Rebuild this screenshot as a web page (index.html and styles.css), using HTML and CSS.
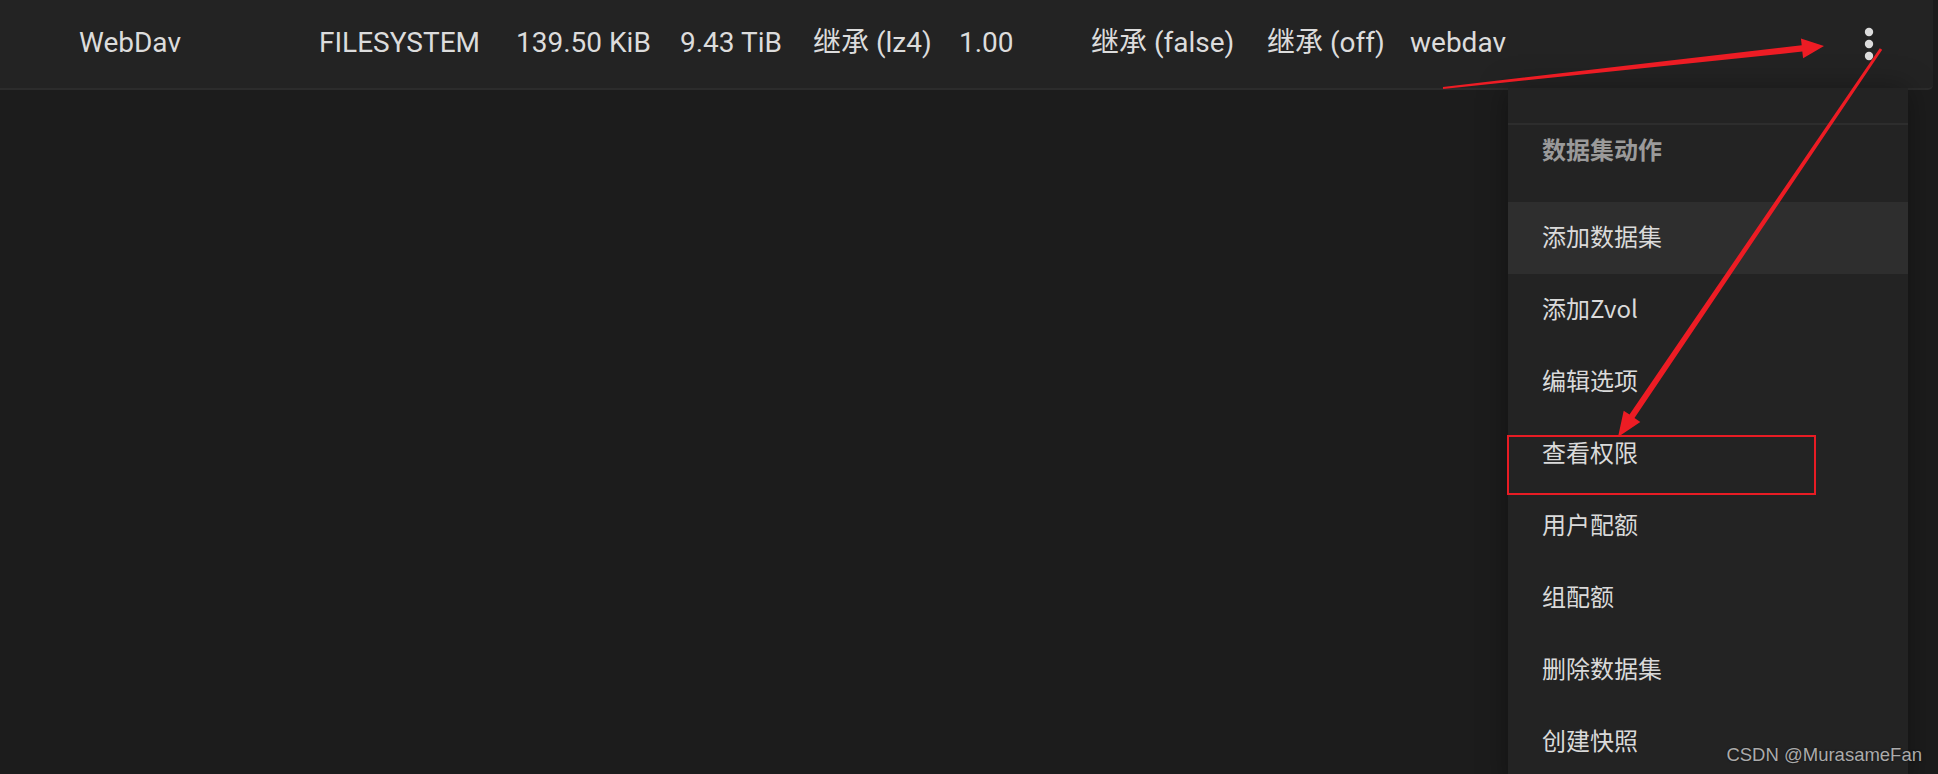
FILE: index.html
```html
<!DOCTYPE html>
<html lang="zh-CN">
<head>
<meta charset="utf-8">
<title>Datasets</title>
<link rel="stylesheet" href="styles.css">
</head>
<body>
<div class="page">
  <div class="row">
    <div class="cell">WebDav</div>
    <div class="cell">FILESYSTEM</div>
    <div class="cell">139.50 KiB</div>
    <div class="cell">9.43 TiB</div>
    <div class="cell">继承 (lz4)</div>
    <div class="cell">1.00</div>
    <div class="cell">继承 (false)</div>
    <div class="cell">继承 (off)</div>
    <div class="cell">webdav</div>
    <div class="cell actions">
      <svg class="dots" width="24" height="36" viewBox="0 0 24 36">
        <circle cx="12" cy="6" r="4.2"/>
        <circle cx="12" cy="18" r="4.2"/>
        <circle cx="12" cy="30" r="4.2"/>
      </svg>
    </div>
  </div>

  <div class="menu">
    <div class="menu-sep"></div>
    <div class="menu-header">数据集动作</div>
    <div class="menu-item active">添加数据集</div>
    <div class="menu-item">添加Zvol</div>
    <div class="menu-item">编辑选项</div>
    <div class="menu-item">查看权限</div>
    <div class="menu-item">用户配额</div>
    <div class="menu-item">组配额</div>
    <div class="menu-item">删除数据集</div>
    <div class="menu-item">创建快照</div>
  </div>

  <div class="highlight-box"></div>

  <svg class="annot" width="1938" height="774" viewBox="0 0 1938 774">
    <polygon points="1442.9,87.0 1801.7,45.2 1800.9,38.5 1824,46 1803.1,58.3 1802.3,51.6 1443.1,89.0"/>
    <polygon points="1882.2,49.8 1634.5,418.0 1640.3,421.9 1618,437 1623.7,410.7 1629.5,414.6 1879.8,48.2"/>
  </svg>

  <div class="watermark">CSDN @MurasameFan</div>
</div>
</body>
</html>
```

FILE: styles.css
```css
html, body {
  margin: 0;
  padding: 0;
  background: #1c1c1c;
  overflow: hidden;
}

.page {
  position: relative;
  width: 1938px;
  height: 774px;
  overflow: hidden;
  font-family: Roboto, "Noto Sans CJK SC", sans-serif;
}

.row {
  width: 1933px;
  height: 90px;
  box-sizing: border-box;
  background: #232323;
  border-bottom: 2px solid #2c2c2c;
  border-bottom-right-radius: 5px;
  display: grid;
  grid-template-columns: 240px 197px 164px 133px 146px 132px 176px 143px 100px 1fr;
  align-items: center;
  padding-left: 79px;
}

.cell {
  font-size: 28px;
  color: #dcdcdc;
  white-space: nowrap;
  line-height: 32px;
  margin-top: -2px;
}

.actions {
  display: flex;
  justify-content: flex-end;
  padding-right: 52px;
}

.dots {
  display: block;
  fill: #dcdcdc;
  margin-top: 2px;
}

.menu {
  position: absolute;
  left: 1508px;
  top: 88px;
  width: 400px;
  height: 700px;
  background: #232323;
  box-shadow: 0 0 28px rgba(0, 0, 0, 0.35);
  padding-top: 35px;
  box-sizing: border-box;
  font-family: "Noto Sans CJK SC", sans-serif;
}

.menu-sep {
  height: 2px;
  background: #2d2d2d;
}

.menu-header {
  height: 77px;
  box-sizing: border-box;
  padding: 8px 0 0 34px;
  line-height: 32px;
  font-size: 24px;
  font-weight: 700;
  color: #9a9a9a;
}

.menu-item {
  height: 72px;
  box-sizing: border-box;
  display: flex;
  align-items: center;
  padding: 0 0 5px 34px;
  font-size: 24px;
  color: #dadada;
}

.menu-item.active {
  background: #2e2e2e;
}

.highlight-box {
  position: absolute;
  left: 1507px;
  top: 435px;
  width: 309px;
  height: 60px;
  box-sizing: border-box;
  border: 2px solid #e81c24;
}

.annot {
  position: absolute;
  left: 0;
  top: 0;
  pointer-events: none;
  fill: #ed1c24;
}

.watermark {
  position: absolute;
  right: 16px;
  top: 744px;
  font-family: "Liberation Sans", Arial, sans-serif;
  font-size: 18.5px;
  line-height: 22px;
  color: #ababab;
  text-shadow: 0 0 2px rgba(0, 0, 0, 0.6);
  white-space: nowrap;
}
```
